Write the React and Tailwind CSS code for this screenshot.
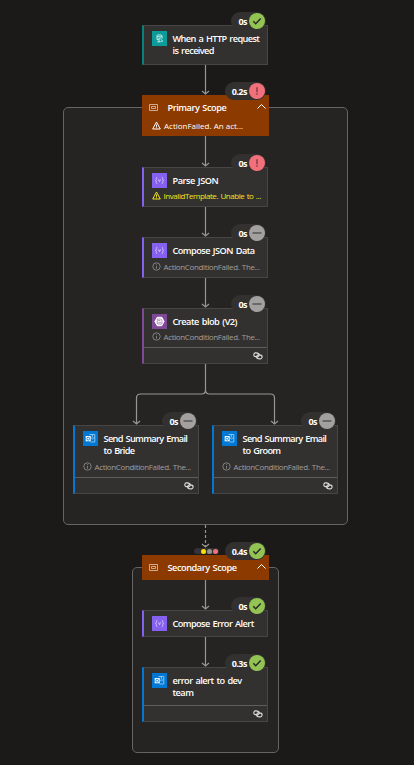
const glyphs = {
  http: { bg: 'bg-[#0c9d9b]', art: (
    <g fill="none" stroke="#d9f2f1" strokeWidth=".9">
      <path d="M5 8.600V5q0-1 1-1h3q1 0 1 1v2.500M5 5.800h5M6.500 7.300h2.200M5 8.600h2.500M8.700 8.200l2 1.800-1.600.5M7 8.600v2.200M5.200 10.800h3.500" />
    </g>
  ) },
  data: { bg: 'bg-[#8661f0]', art: (
    <g fill="none" stroke="#dccffb" strokeWidth=".8">
      <path d="M5.2 4.4c-1.3 0-.9 1.2-.9 2.1 0 .6-.3 1-.8 1 .5 0 .8.4.8 1 0 .9-.4 2.1.9 2.1M9.800 4.400c1.300 0 .9 1.200.9 2.100 0 .6.3 1 .8 1-.5 0-.8.4-.8 1 0 .9.4 2.100-.9 2.100M6.500 6.300l1 2.500 1-2.500" />
    </g>
  ) },
  blob: { bg: 'bg-[#804998]', art: (
    <g>
      <path d="M5.200 3.300h4.600l2.300 4.200-2.300 4.200H5.200L2.900 7.500Z" fill="#fff" stroke="#fff" strokeLinejoin="round" />
      <path d="M5.300 5h3.500l1.200 1.200V10H5.300ZM6.300 6.500h2M6.300 8.400h2.600" fill="none" stroke="#a67ab8" strokeWidth=".8" />
    </g>
  ) },
  mail: { bg: 'bg-[#0078d4]', art: (
    <g>
      <path d="M6.500 3.500h5.300v7.500H7.500M7.500 6.500l2 1.500 2.300-2M9.300 3.500v3" fill="none" stroke="#a9d3f2" strokeWidth=".8" />
      <rect x="2.700" y="5" width="5" height="5.300" fill="#fff" />
      <ellipse cx="5.200" cy="7.700" rx="1.300" ry="1.500" fill="none" stroke="#0078d4" strokeWidth=".9" />
    </g>
  ) },
};

function Glyph({ kind }) {
  const g = glyphs[kind];
  return (
    <span className={`block h-[15px] w-[15px] shrink-0 ${g.bg}`}>
      <svg viewBox="0 0 15 15" className="h-[15px] w-[15px]">{g.art}</svg>
    </span>
  );
}

const discs = {
  ok: { bg: 'bg-[#92c353]', art: <path d="m4.300 8.300 2.400 2.400 5-5.200" fill="none" stroke="#292827" strokeWidth="1.500" /> },
  fail: { bg: 'bg-[#f1707b]', art: <path d="M8 4.300v4.900M8 10.300v1.500" fill="none" stroke="#6b3036" strokeWidth="1.200" /> },
  skip: { bg: 'bg-[#a3a19f]', art: <path d="M3.500 8h9" fill="none" stroke="#454443" strokeWidth="1.200" /> },
};

function Badge({ status, time, place }) {
  const d = discs[status];
  return (
    <div className={`absolute flex h-[18px] items-center gap-[2px] rounded-full bg-[#323130] pr-px pl-[7px] ${place}`}>
      <span className="text-[9px] leading-none font-bold tracking-[-0.500px] text-white">{time}</span>
      <span className={`block h-4 w-4 rounded-full ${d.bg}`}>
        <svg viewBox="0 0 16 16" className="h-4 w-4">{d.art}</svg>
      </span>
    </div>
  );
}

function LinkIcon() {
  return (
    <svg viewBox="0 0 10 8" className="h-2 w-[10px]" fill="none" stroke="#e1dfdd" strokeWidth="1.100">
      <rect x=".8" y="1" width="5.400" height="3.800" rx="1.900" transform="rotate(8 3.500 2.800)" />
      <rect x="3.700" y="3" width="5.400" height="3.800" rx="1.900" transform="rotate(8 6.400 5)" />
    </svg>
  );
}

function Warning({ className }) {
  return (
    <svg viewBox="0 0 9 9" className={`h-[9px] w-[9px] shrink-0 ${className}`} fill="none" stroke="currentColor" strokeWidth="1">
      <path d="M4.500 1 8.300 8H.7ZM4.500 3.500v2.300M4.500 6.300v.9" />
    </svg>
  );
}

function Info() {
  return (
    <svg viewBox="0 0 9 9" className="h-[9px] w-[9px] shrink-0" fill="none" stroke="#a19f9d" strokeWidth=".7">
      <circle cx="4.500" cy="4.500" r="3.700" />
      <path d="M4.500 2.300v.8M4.500 3.900v2.800" />
    </svg>
  );
}

function Action({ place, accent, icon, title, titleStyle, message, failed, status, time, link }) {
  return (
    <div className={`absolute flex w-[126px] flex-col border border-l-2 border-[#484644] bg-[#323130] ${accent} ${place}`}>
      <div className="flex gap-[5.500px] pt-[5px] pl-[8px]">
        <Glyph kind={icon} />
        <div className={`pt-[1.500px] text-[9.200px] leading-[12.500px] font-semibold [word-spacing:1px] whitespace-pre text-white ${titleStyle}`}>{title}</div>
      </div>
      {message && (
        <div className={`mt-auto mb-[5px] flex h-[11px] items-center gap-[2.500px] pl-[8px] text-[8px] leading-[11px] whitespace-nowrap ${failed ? 'tracking-[-0.440px] [word-spacing:.7px] text-[#f2e51b]' : 'tracking-[-0.360px] [word-spacing:.7px] text-[#a19f9d]'}`}>
          {failed ? <Warning className="text-[#f2e51b]" /> : <Info />}
          <span>{message}</span>
        </div>
      )}
      {link && (
        <div className={`flex h-[16px] shrink-0 items-center justify-end border-t border-[#605e5c] pr-1 ${message ? '' : 'mt-auto'}`}>
          <LinkIcon />
        </div>
      )}
      <Badge status={status} time={time} place="-top-[14px] right-[1px]" />
    </div>
  );
}

function Scope({ place, title, titleStyle, message, status, time }) {
  return (
    <div className={`absolute left-[142px] w-[127px] bg-[#8c3a00] text-white ${place}`}>
      <div className="flex h-[25px] items-center">
        <svg viewBox="0 0 9 7" className="ml-[7px] h-[7px] w-[9px]" fill="none" stroke="#d9b79f" strokeWidth=".9">
          <path d="M.5.5h8v6h-8ZM2.500 2.500h4v2h-4Z" />
        </svg>
        <span className={`ml-[9.500px] pt-px text-[9.200px] font-semibold [word-spacing:1px] whitespace-nowrap ${titleStyle}`}>{title}</span>
        <svg viewBox="0 0 9 5" className="mr-[3px] mb-[2px] ml-auto h-[5px] w-[9px]" fill="none" stroke="#fff" strokeWidth="1">
          <path d="m.5 4.500 4-4 4 4" />
        </svg>
      </div>
      {message && (
        <div className="flex h-[11px] items-center gap-[3px] pl-[10px] text-[8px] leading-[11px] whitespace-nowrap">
          <Warning className="text-white" />
          <span>{message}</span>
        </div>
      )}
      <Badge status={status} time={time} place="-top-[13px] right-[3px]" />
    </div>
  );
}

const arrowTips = [[205.5, 94], [205.5, 166], [205.5, 236], [205.5, 307], [136.5, 424], [274.5, 424], [205.5, 547], [205.5, 609], [205.5, 666]];

function Connectors() {
  return (
    <svg viewBox="0 0 414 765" className="absolute inset-0 h-[765px] w-[414px]" fill="none" stroke="#989694" strokeWidth="1.200">
      <path d="M205.500 64v30M205.500 136v30M205.500 207v29M205.500 278v29M205.500 364v26q0 4-4 4H140.500q-4 0-4 4v26M205.500 390q0 4 4 4H270.500q4 0 4 4v26M205.500 580v29M205.500 637v29" />
      <path d="M205.500 525v21" strokeDasharray="3 2" />
      {arrowTips.map(([x, y]) => (
        <path key={`${x}-${y}`} d={`M${x - 3.5} ${y - 3}l3.500 3 3.500-3`} />
      ))}
    </svg>
  );
}

export default function App() {
  return (
    <main className="relative h-[765px] w-[414px] overflow-hidden bg-[#1b1a19] font-['Open_Sans','Noto_Sans',sans-serif]">
      <div className="absolute top-[107px] left-[63px] h-[418px] w-[285px] rounded-[5px] border border-[#666462] bg-[#252423]" />
      <div className="absolute top-[567px] left-[132px] h-[186px] w-[147px] rounded-[5px] border border-[#666462] bg-[#252423]" />
      <Connectors />

      <Action place="top-[25px] left-[142px] h-[40px]" accent="border-l-[#07807e]" icon="http" title={'When a HTTP request\nis received'} titleStyle="tracking-[-0.600px]" status="ok" time="0s" />

      <Scope place="top-[95px] h-[41px]" title="Primary Scope" titleStyle="tracking-[-0.460px]" message="ActionFailed. An act..." status="fail" time="0.2s" />
      <Action place="top-[167px] left-[142px] h-[40px]" accent="border-l-[#8661f0]" icon="data" title="Parse JSON" titleStyle="tracking-[-0.460px]" message="InvalidTemplate. Unable to ..." failed status="fail" time="0s" />
      <Action place="top-[237px] left-[142px] h-[41px]" accent="border-l-[#8661f0]" icon="data" title="Compose JSON Data" titleStyle="tracking-[-0.540px]" message="ActionConditionFailed. The..." status="skip" time="0s" />
      <Action place="top-[308px] left-[142px] h-[56px]" accent="border-l-[#804998]" icon="blob" title="Create blob (V2)" titleStyle="tracking-[-0.500px]" message="ActionConditionFailed. The..." status="skip" time="0s" link />
      <Action place="top-[425px] left-[73px] h-[69px]" accent="border-l-[#0078d4]" icon="mail" title={'Send Summary Email\nto Bride'} titleStyle="tracking-[-0.660px]" message="ActionConditionFailed. The..." status="skip" time="0s" link />
      <Action place="top-[425px] left-[212px] h-[69px]" accent="border-l-[#0078d4]" icon="mail" title={'Send Summary Email\nto Groom'} titleStyle="tracking-[-0.660px]" message="ActionConditionFailed. The..." status="skip" time="0s" link />

      <div className="absolute top-[548px] left-[194px] flex h-[6px] items-center gap-px rounded-full bg-[#323130] px-[1px]">
        <span className="h-[5px] w-[5px] rounded-full bg-[#3b3040]" />
        <span className="h-[5px] w-[5px] rounded-full bg-[#fce100]" />
        <span className="h-[5px] w-[5px] rounded-full bg-[#979593]" />
        <span className="h-[5px] w-[5px] rounded-full bg-[#f1707b]" />
      </div>
      <Scope place="top-[555px] h-[25px]" title="Secondary Scope" titleStyle="tracking-[-0.460px]" status="ok" time="0.4s" />
      <Action place="top-[610px] left-[142px] h-[27px]" accent="border-l-[#8661f0]" icon="data" title="Compose Error Alert" titleStyle="tracking-[-0.580px]" status="ok" time="0s" />
      <Action place="top-[667px] left-[142px] h-[55px]" accent="border-l-[#0078d4]" icon="mail" title={'error alert to dev\nteam'} titleStyle="tracking-[-0.540px]" status="ok" time="0.3s" link />
    </main>
  );
}
